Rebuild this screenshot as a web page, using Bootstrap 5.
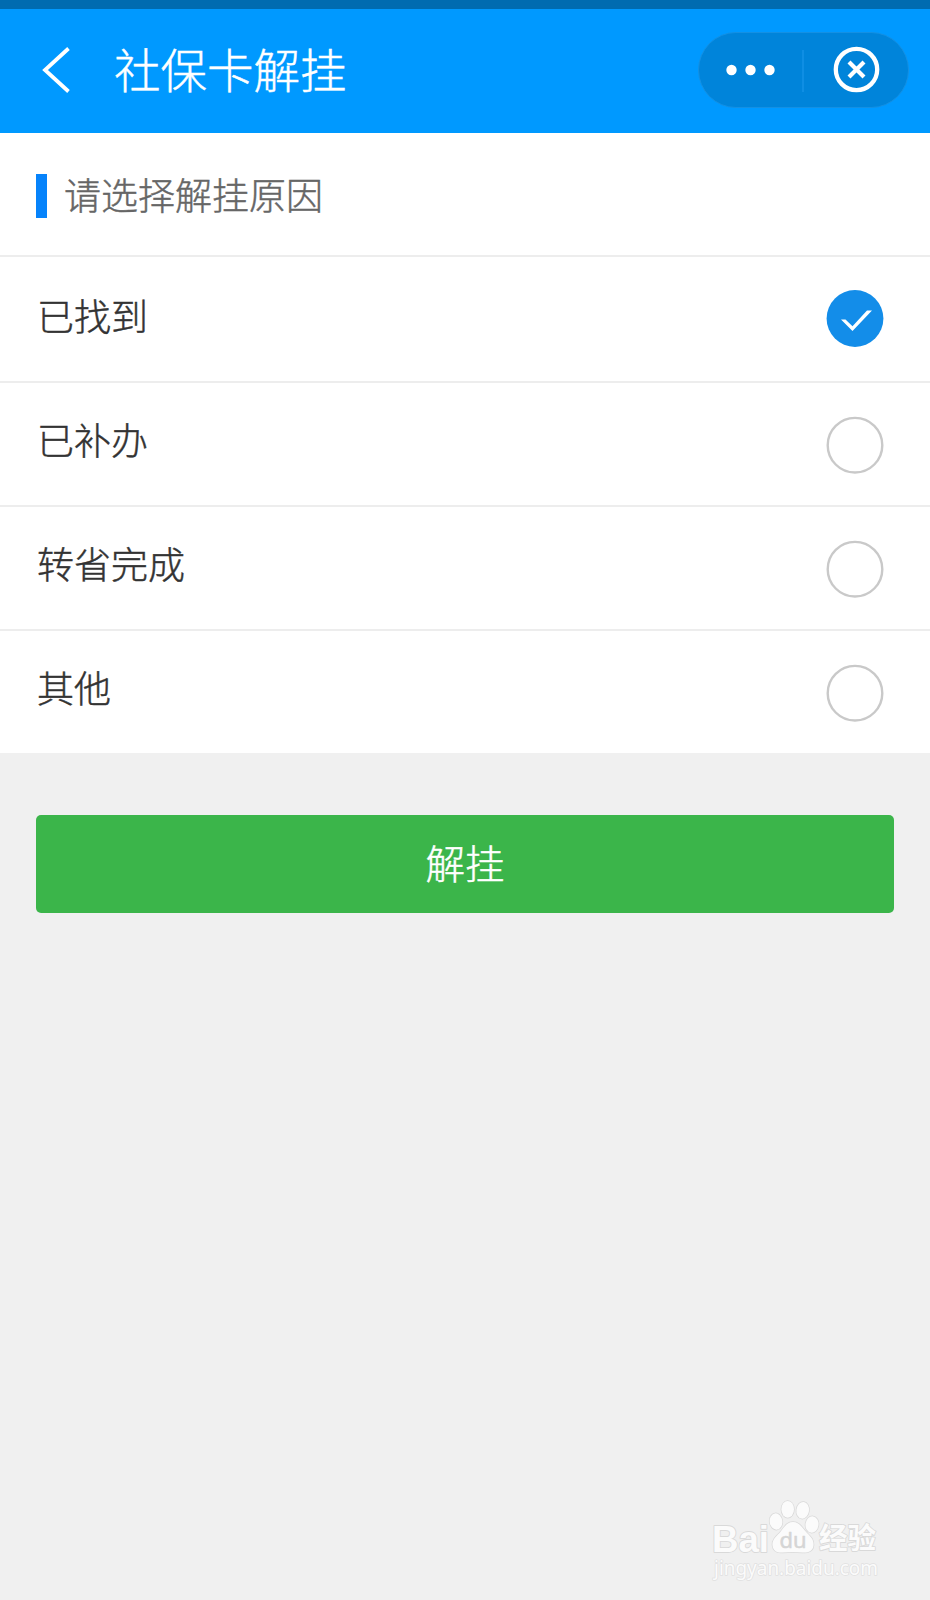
<!DOCTYPE html>
<html lang="zh-CN">
<head>
<meta charset="utf-8">
<meta name="viewport" content="width=device-width, initial-scale=1">
<title>社保卡解挂</title>
<link href="https://cdn.jsdelivr.net/npm/bootstrap@5.3.0/dist/css/bootstrap.min.css" rel="stylesheet">
<style>
  body { background: #f0f0f0; font-family: "Noto Sans CJK SC", sans-serif; font-weight: 300; color: #333; }
  .page-title, .panel-title, .reason-label, .btn-submit { -webkit-text-stroke: .45px currentColor; }
  .status-strip { height: 9px; background: #006bb0; }
  .top-bar { height: 124px; background: #0099ff; padding: 0 21px 3px 41px; }
  .page-title { font-size: 46.5px; line-height: 60px; font-weight: 300; margin-left: 43px; padding-bottom: 3px; }
  .capsule { width: 211px; height: 76px; background: #0084da; border: 1px solid #1490e3; }
  .panel-head { height: 124px; padding: 0 36px; border-bottom: 2px solid #ededed; }
  .accent-bar { width: 11px; height: 44px; margin-top: 4px; background: #0683fb; }
  .panel-title { font-size: 37px; line-height: 50px; font-weight: 300; color: #666; margin-left: 17px; }
  .list-group-flush > .reason { height: 124px; padding: 0 46px 0 37px; border: 0; border-bottom: 2px solid #ededed; border-radius: 0; background: #fff; color: #333; }
  .list-group-flush > .reason:first-child { height: 126px; padding-bottom: 2px; }
  .list-group-flush > .reason:last-child { height: 122px; border-bottom: 0; }
  .reason-label { font-size: 37px; line-height: 50px; padding-bottom: 10px; }
  .reason:first-child .reason-label { padding-bottom: 6px; }
  .btn-submit { height: 98px; font-size: 39.5px; font-weight: 300; border-radius: 5px; --bs-btn-bg: #3bb54a; --bs-btn-color: #fff; --bs-btn-hover-bg: #34a542; --bs-btn-hover-color: #fff; padding: 0 0 5px; border: 0; }
  .submit-area { padding: 62px 36px 0; }
  .watermark { padding: 0 40px 19px 0; }
</style>
</head>
<body>
<div class="d-flex flex-column min-vh-100">
  <div class="status-strip"></div>
  <header class="top-bar d-flex align-items-center text-white">
    <svg width="30" height="46" viewBox="0 0 30 46" fill="none" stroke="#fff" stroke-width="3.800"><path d="M27.500 1.500 4 23 27.500 44.500"/></svg>
    <h1 class="page-title mb-0">社保卡解挂</h1>
    <div class="capsule rounded-pill ms-auto">
      <svg class="d-block" width="209" height="74" viewBox="0 0 209 74">
        <g fill="#fff"><circle cx="32.500" cy="37" r="5.200"/><circle cx="51.500" cy="37" r="5.200"/><circle cx="70.500" cy="37" r="5.200"/></g>
        <path d="M104 17V59" stroke="#1592e6" stroke-width="1.500"/>
        <circle cx="157.500" cy="36.500" r="20.700" fill="none" stroke="#fff" stroke-width="4.300"/>
        <path d="M150 29l15 15m0-15-15 15" stroke="#fff" stroke-width="4.200"/>
      </svg>
    </div>
  </header>
  <main>
    <section class="bg-white">
      <div class="panel-head d-flex align-items-center">
        <div class="accent-bar"></div>
        <h2 class="panel-title mb-0">请选择解挂原因</h2>
      </div>
      <div class="list-group list-group-flush">
        <div class="reason list-group-item d-flex align-items-center justify-content-between">
          <span class="reason-label">已找到</span>
          <svg width="58" height="58" viewBox="0 0 58 58"><circle cx="29" cy="29.500" r="28.400" fill="#138de9"/><path d="M15 30.500h4.500l7 6.800L41 21.500h5L26.500 42z" fill="#fff"/></svg>
        </div>
        <div class="reason list-group-item d-flex align-items-center justify-content-between">
          <span class="reason-label">已补办</span>
          <svg class="overflow-visible" width="58" height="58" viewBox="0 0 58 58"><circle cx="29" cy="30.200" r="27.300" fill="#fff" stroke="#c9c9c9" stroke-width="2.400"/></svg>
        </div>
        <div class="reason list-group-item d-flex align-items-center justify-content-between">
          <span class="reason-label">转省完成</span>
          <svg class="overflow-visible" width="58" height="58" viewBox="0 0 58 58"><circle cx="29" cy="30.200" r="27.300" fill="#fff" stroke="#c9c9c9" stroke-width="2.400"/></svg>
        </div>
        <div class="reason list-group-item d-flex align-items-center justify-content-between">
          <span class="reason-label">其他</span>
          <svg class="overflow-visible" width="58" height="58" viewBox="0 0 58 58"><circle cx="29" cy="30.200" r="27.300" fill="#fff" stroke="#c9c9c9" stroke-width="2.400"/></svg>
        </div>
      </div>
    </section>
    <div class="submit-area">
      <button type="button" class="btn btn-submit w-100">解挂</button>
    </div>
  </main>
  <footer class="watermark mt-auto d-flex justify-content-end">
    <svg width="180" height="90" viewBox="0 0 180 90" fill="#fbfbfb" stroke="#d9d9d9" stroke-width="1.800" stroke-linejoin="round" paint-order="stroke">
      <text x="2" y="61" font-family="'Liberation Sans', sans-serif" font-weight="700" font-size="37" textLength="57" lengthAdjust="spacingAndGlyphs">Bai</text>
      <g stroke-width="1.500">
        <ellipse cx="66" cy="30.500" rx="6.300" ry="8.200" transform="rotate(-8 66 30.500)"/>
        <ellipse cx="77.700" cy="18.300" rx="6.300" ry="8.400"/>
        <ellipse cx="92.700" cy="19.300" rx="6.300" ry="8.400" transform="rotate(8 92.700 19.300)"/>
        <ellipse cx="102" cy="33.500" rx="6.500" ry="8.200" transform="rotate(8 102 33.500)"/>
        <path d="M83 31c-7 0-9 6-13.500 11-4 4-7.500 7-7 12.500.7 5.500 5 7.500 10 7 7-.8 13-.8 20 0 5 .5 10.500-1 11-7 .5-5.500-2.500-8.500-6.500-12.500-5-5-7-11-14-11z"/>
      </g>
      <text x="69.500" y="56.500" font-family="'Open Sans', sans-serif" font-weight="400" font-size="22" textLength="27" lengthAdjust="spacingAndGlyphs" fill="#d5d5d5" stroke="#d5d5d5" stroke-width=".6">du</text>
      <text x="109" y="58" font-family="'Noto Sans CJK SC', sans-serif" font-weight="700" font-size="29" textLength="57" lengthAdjust="spacingAndGlyphs">经验</text>
      <text x="4" y="83.500" font-family="'Noto Sans', sans-serif" font-weight="400" font-size="19" textLength="164" lengthAdjust="spacingAndGlyphs" stroke="#e0e0e0" stroke-width="1.500">jingyan.baidu.com</text>
    </svg>
  </footer>
</div>
<script src="https://cdn.jsdelivr.net/npm/bootstrap@5.3.0/dist/js/bootstrap.bundle.min.js"></script>
</body>
</html>
